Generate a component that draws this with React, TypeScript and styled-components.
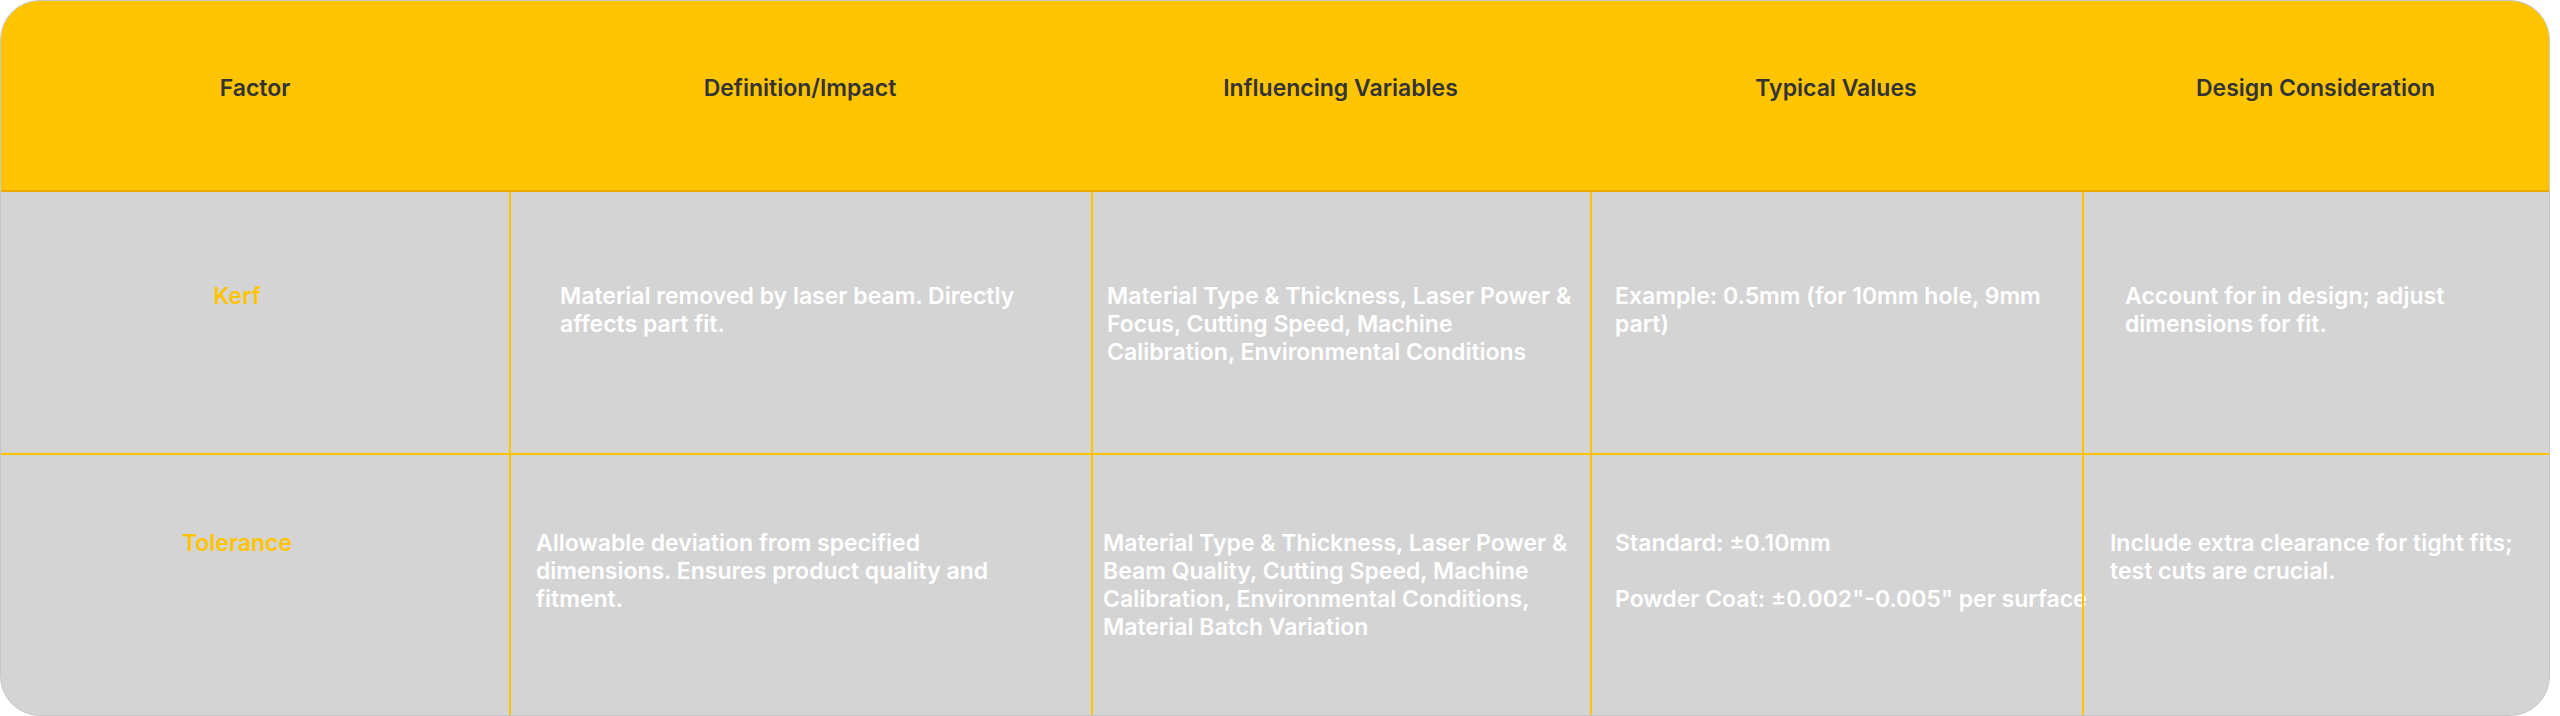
import styled, { createGlobalStyle } from "styled-components";

const GlobalStyle = createGlobalStyle`
  html, body {
    margin: 0;
    padding: 0;
    background: #ffffff;
  }
  body {
    font-family: Inter, "Noto Sans", "Liberation Sans", sans-serif;
  }
`;

const YELLOW = "#ffc400";
const COLS = "508px 582px 499px 492px 1fr";

type CellData = {
  text: string[];
  pl: number;
  pr: number;
  label?: boolean;
};

type RowData = {
  height: number;
  top: number;
  cells: CellData[];
};

const headers = [
  "Factor",
  "Definition/Impact",
  "Influencing Variables",
  "Typical Values",
  "Design Consideration",
];

const rows: RowData[] = [
  {
    height: 263,
    top: 90,
    cells: [
      { text: ["Kerf"], pl: 0, pr: 36, label: true },
      {
        text: ["Material removed by laser beam. Directly affects part fit."],
        pl: 49,
        pr: 30,
      },
      {
        text: [
          "Material Type & Thickness, Laser Power & Focus, Cutting Speed, Machine Calibration, Environmental Conditions",
        ],
        pl: 14,
        pr: 12,
      },
      { text: ["Example: 0.5mm (for 10mm hole, 9mm part)"], pl: 23, pr: 20 },
      {
        text: ["Account for in design; adjust dimensions for fit."],
        pl: 41,
        pr: 60,
      },
    ],
  },
  {
    height: 260,
    top: 74,
    cells: [
      { text: ["Tolerance"], pl: 0, pr: 36, label: true },
      {
        text: [
          "Allowable deviation from specified dimensions. Ensures product quality and fitment.",
        ],
        pl: 25,
        pr: 70,
      },
      {
        text: [
          "Material Type & Thickness, Laser Power & Beam Quality, Cutting Speed, Machine Calibration, Environmental Conditions, Material Batch Variation",
        ],
        pl: 10,
        pr: 16,
      },
      {
        text: ["Standard: ±0.10mm", "Powder Coat: ±0.002\"-0.005\" per surface"],
        pl: 23,
        pr: 0,
      },
      {
        text: ["Include extra clearance for tight fits; test cuts are crucial."],
        pl: 26,
        pr: 18,
      },
    ],
  },
];

const Table = styled.div`
  width: 2550px;
  box-sizing: border-box;
  border: 1px solid #c6c6c6;
  border-radius: 40px;
  overflow: hidden;
  background: #d4d4d4;
`;

const HeaderRow = styled.div`
  display: grid;
  grid-template-columns: ${COLS};
  height: 191px;
  box-sizing: border-box;
  background: ${YELLOW};
  border-bottom: 2px solid #e8a900;
`;

const HeaderCell = styled.div`
  display: flex;
  align-items: center;
  justify-content: center;
  padding-bottom: 16px;
  font-size: 23px;
  font-weight: 600;
  color: #333333;
`;

const BodyRow = styled.div<{ $height: number; $last?: boolean }>`
  display: grid;
  grid-template-columns: ${COLS};
  height: ${(p) => p.$height}px;
  box-sizing: border-box;
  border-bottom: ${(p) => (p.$last ? "none" : `2px solid ${YELLOW}`)};
`;

const Cell = styled.div<{
  $top: number;
  $pl: number;
  $pr: number;
  $label?: boolean;
  $first?: boolean;
}>`
  box-sizing: border-box;
  padding: ${(p) => `${p.$top}px ${p.$pr}px 0 ${p.$pl}px`};
  border-left: ${(p) => (p.$first ? "none" : `2px solid ${YELLOW}`)};
  text-align: ${(p) => (p.$label ? "center" : "left")};
  color: ${(p) => (p.$label ? YELLOW : "#ffffff")};
  font-size: 23px;
  font-weight: 600;
  line-height: 28px;
  white-space: ${(p) => (p.$pr === 0 ? "nowrap" : "normal")};
`;

const Para = styled.p`
  margin: 0;
  & + & {
    margin-top: 28px;
  }
`;

export default function App() {
  return (
    <>
      <GlobalStyle />
      <Table>
        <HeaderRow>
          {headers.map((h) => (
            <HeaderCell key={h}>{h}</HeaderCell>
          ))}
        </HeaderRow>
        {rows.map((row, ri) => (
          <BodyRow key={ri} $height={row.height} $last={ri === rows.length - 1}>
            {row.cells.map((c, ci) => (
              <Cell
                key={ci}
                $top={row.top}
                $pl={c.pl}
                $pr={c.pr}
                $label={c.label}
                $first={ci === 0}
              >
                {c.text.map((t, ti) => (
                  <Para key={ti}>{t}</Para>
                ))}
              </Cell>
            ))}
          </BodyRow>
        ))}
      </Table>
    </>
  );
}
